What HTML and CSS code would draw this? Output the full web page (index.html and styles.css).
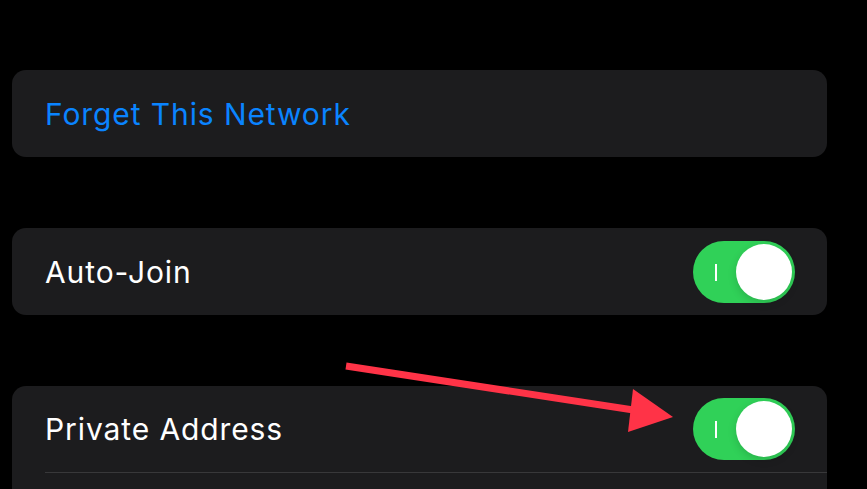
FILE: index.html
```html
<!DOCTYPE html>
<html lang="en">
<head>
    <meta charset="UTF-8">
    <meta name="viewport" content="width=device-width, initial-scale=1.0">
    <title>Wi-Fi Network</title>
    <link rel="stylesheet" href="styles.css">
</head>
<body>
    <div class="settings">
        <div class="group">
            <div class="row">
                <span class="action">Forget This Network</span>
            </div>
        </div>

        <div class="group">
            <div class="row">
                <span class="label">Auto-Join</span>
                <div class="toggle on"><span class="mark"></span><span class="knob"></span></div>
            </div>
        </div>

        <div class="group">
            <div class="row divided">
                <span class="label">Private Address</span>
                <div class="toggle on"><span class="mark"></span><span class="knob"></span></div>
            </div>
            <div class="row cut"></div>
        </div>
    </div>

    <svg class="arrow" width="867" height="489" viewBox="0 0 867 489">
        <line x1="346" y1="366" x2="640" y2="411" stroke="#ff3347" stroke-width="7" />
        <polygon points="673,417 633,389 628,432" fill="#ff3347" />
    </svg>
</body>
</html>
```

FILE: styles.css
```css
body {
    margin: 0;
    background: #000;
    font-family: 'Inter', 'Roboto', sans-serif;
    color: #fff;
    overflow: hidden;
    height: 489px;
    position: relative;
}
.settings {
    display: flex;
    flex-direction: column;
    gap: 71px;
    padding: 70px 40px 0 12px;
    height: 489px;
    box-sizing: border-box;
    overflow: hidden;
}
.group {
    flex-shrink: 0;
    background: #1c1c1e;
    border-radius: 14px;
    padding-left: 33px;
}
.row {
    height: 87px;
    display: flex;
    align-items: center;
    justify-content: space-between;
    padding-right: 32px;
    box-sizing: border-box;
}
.row.divided {
    border-bottom: 1px solid #38383a;
}
.row.cut {
    height: 40px;
}
.action, .label {
    font-size: 30px;
    letter-spacing: 0.9px;
}
.action {
    color: #0a84ff;
}
.toggle {
    width: 102px;
    height: 62px;
    border-radius: 31px;
    background: #39393d;
    position: relative;
}
.toggle.on {
    background: #30d158;
}
.mark {
    position: absolute;
    left: 22px;
    top: 23px;
    width: 2px;
    height: 17px;
    background: #fff;
}
.knob {
    position: absolute;
    right: 3px;
    top: 3px;
    width: 56px;
    height: 56px;
    border-radius: 50%;
    background: #fff;
    box-shadow: 0 3px 8px rgba(0, 0, 0, 0.15);
}
.arrow {
    position: absolute;
    left: 0;
    top: 0;
}
```
